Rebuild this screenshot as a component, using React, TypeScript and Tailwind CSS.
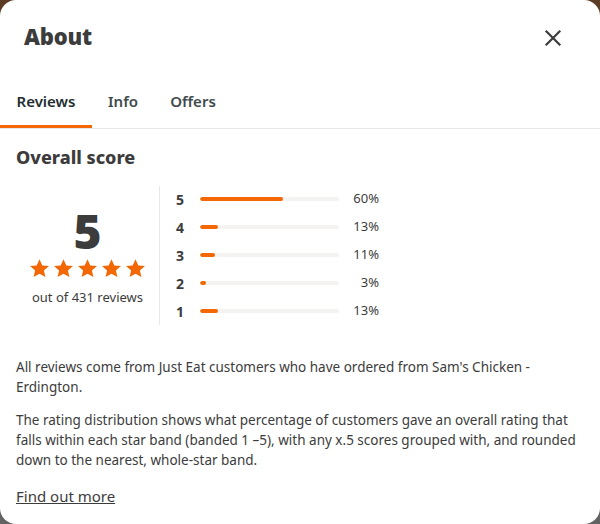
import React from 'react';

const rows = [
  { star: 5, pct: 60 },
  { star: 4, pct: 13 },
  { star: 3, pct: 11 },
  { star: 2, pct: 3 },
  { star: 1, pct: 13 },
];

const Star = () => (
  <svg width="21" height="21" viewBox="0 0 24 24" className="fill-[#f36805]">
    <path d="M12 1.5l3.2 7 7.6.7-5.8 5.1 1.8 7.5L12 17.9l-6.8 3.9 1.8-7.5-5.8-5.1 7.6-.7z" />
  </svg>
);

const App: React.FC = () => {
  return (
    <div className="w-[600px] h-[524px] bg-[linear-gradient(180deg,#5b3c24_0%,#5e5e5e_60%,#636363_100%)] font-['Noto_Sans',sans-serif] text-[#3c3c3c]">
      <div className="h-full bg-white rounded-[16px] overflow-hidden flex flex-col">
        {/* Header */}
        <div className="flex justify-between pl-6 pr-[38px] pt-[22px] h-[74px] items-start">
          <h1 className="text-[22px] font-black tracking-[-0.2px] text-[#3c3c3c] leading-[28px]">About</h1>
          <button className="mt-[7px]">
            <svg width="18" height="18" viewBox="0 0 18 18" stroke="#3c3c3c" strokeWidth="2.2" strokeLinecap="square">
              <path d="M2.5 2.5l13 13M15.5 2.5l-13 13" />
            </svg>
          </button>
        </div>

        {/* Tabs */}
        <div className="flex border-b border-[#e8e8e8] h-[55px]">
          <div className="w-[92px] flex items-center justify-center border-b-[3px] border-[#f36805] text-[15px] font-semibold text-[#242e30] pt-[3px]">
            Reviews
          </div>
          <div className="w-[62px] flex items-center justify-center text-[15px] font-semibold text-[#3e4b4d]">Info</div>
          <div className="w-[78px] flex items-center justify-center text-[15px] font-semibold text-[#3e4b4d]">Offers</div>
        </div>

        <div className="px-4">
          <h2 className="text-[18px] font-extrabold mt-[16px] leading-[24px]">Overall score</h2>

          <div className="flex mt-[17px]">
            <div className="w-[144px] flex flex-col items-center border-r border-[#e8e8e8] pt-[19px] pb-[11px]">
              <div className="text-[48px] font-black leading-[52px] text-[#3c3c3c]">5</div>
              <div className="flex gap-[3px] mt-[1px]">
                <Star />
                <Star />
                <Star />
                <Star />
                <Star />
              </div>
              <div className="text-[13px] mt-[9px] leading-[18px]">out of 431 reviews</div>
            </div>

            <div className="flex flex-col pl-[16px] -mt-[1px]">
              {rows.map((r) => (
                <div key={r.star} className="flex items-center h-[28px]">
                  <span className="w-[24px] text-[14px] font-bold">{r.star}</span>
                  <div className="w-[139px] h-[4px] rounded-full bg-[#f5f3f1] overflow-hidden">
                    <div className="h-full rounded-full bg-[#f36805]" style={{ width: `${Math.max(r.pct, 4)}%` }} />
                  </div>
                  <span className="w-[40px] text-right text-[13px]">{r.pct}%</span>
                </div>
              ))}
            </div>
          </div>

          <p className="text-[13.5px] leading-[20px] mt-[32px]">
            All reviews come from Just Eat customers who have ordered from Sam's Chicken - Erdington.
          </p>
          <p className="text-[13.5px] leading-[20px] mt-[13px]">
            The rating distribution shows what percentage of customers gave an overall rating that falls within each
            star band (banded 1 –5), with any x.5 scores grouped with, and rounded down to the nearest, whole-star band.
          </p>
          <a className="inline-block text-[15px] underline mt-[15px]">Find out more</a>
        </div>
      </div>
    </div>
  );
};

export default App;
